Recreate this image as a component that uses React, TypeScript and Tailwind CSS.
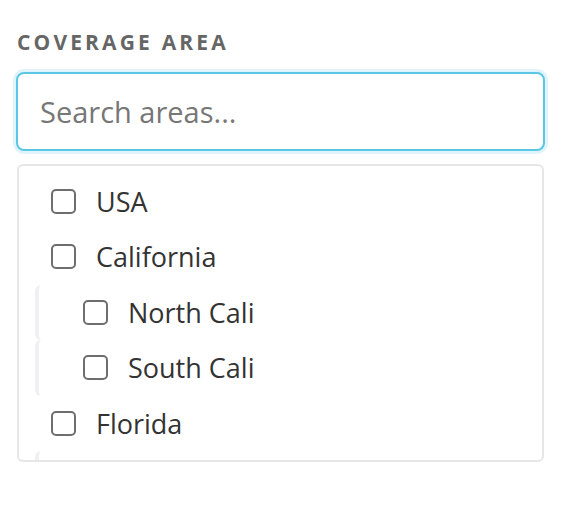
import { useState } from "react";

type Area = { id: string; label: string; children?: Area[] };

const areas: Area[] = [
  { id: "usa", label: "USA" },
  {
    id: "ca",
    label: "California",
    children: [
      { id: "nca", label: "North Cali" },
      { id: "sca", label: "South Cali" },
    ],
  },
  {
    id: "fl",
    label: "Florida",
    children: [
      { id: "nfl", label: "North Florida" },
      { id: "sfl", label: "South Florida" },
    ],
  },
];

const Row = ({
  label,
  checked,
  onToggle,
  nested,
}: {
  label: string;
  checked: boolean;
  onToggle: () => void;
  nested?: boolean;
}) => (
  <label
    className={
      nested
        ? "ml-[16px] flex h-[55.5px] cursor-pointer items-center gap-[20px] rounded-[6px] border-l-4 border-[#f0f0f4] pl-[44px]"
        : "flex h-[55.5px] cursor-pointer items-center gap-[20px] pl-[32px]"
    }
  >
    <input
      type="checkbox"
      checked={checked}
      onChange={onToggle}
      className="h-[25px] w-[25px] shrink-0 cursor-pointer appearance-none rounded-[5px] border-2 border-[#6e6e6e] bg-white checked:bg-[#5bc6e6]"
    />
    <span className="text-[27px] leading-none text-[#333]">{label}</span>
  </label>
);

export default function App() {
  const [query, setQuery] = useState("");
  const [selected, setSelected] = useState<Record<string, boolean>>({});
  const toggle = (id: string) => setSelected((s) => ({ ...s, [id]: !s[id] }));

  return (
    <div className="min-h-[506px] bg-white px-[16px] pt-[27px] font-['Open_Sans',sans-serif]">
      <div className="pl-[1px] text-[21px] font-bold tracking-[0.15em] text-[#666]">
        COVERAGE AREA
      </div>
      <div className="mt-[10px] -ml-[3px] w-[535px] rounded-[11px] bg-[#e2f4fb] p-[3px]">
        <input
          autoFocus
          value={query}
          onChange={(e) => setQuery(e.target.value)}
          placeholder="Search areas..."
          className="h-[79px] w-full rounded-[8px] border-2 border-[#5bc6e6] bg-white px-[22px] text-[29px] text-[#333] caret-[#222] outline-none placeholder:text-[#777]"
        />
      </div>
      <div className="mt-[10px] ml-[1px] h-[298px] w-[527px] overflow-hidden rounded-[6px] border-2 border-[#e6e6e6] pt-[8px]">
        {areas.map((a) => (
          <div key={a.id}>
            <Row label={a.label} checked={!!selected[a.id]} onToggle={() => toggle(a.id)} />
            {a.children?.map((c) => (
              <Row
                key={c.id}
                nested
                label={c.label}
                checked={!!selected[c.id]}
                onToggle={() => toggle(c.id)}
              />
            ))}
          </div>
        ))}
      </div>
    </div>
  );
}
